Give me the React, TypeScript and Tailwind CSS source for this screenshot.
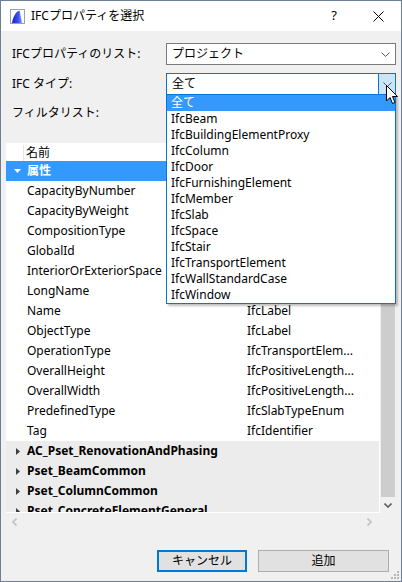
import React from 'react';

// values of the first rows are hidden behind the open dropdown
const props: [string, string][] = [
  ['CapacityByNumber', ''],
  ['CapacityByWeight', ''],
  ['CompositionType', ''],
  ['GlobalId', ''],
  ['InteriorOrExteriorSpace', ''],
  ['LongName', ''],
  ['Name', 'IfcLabel'],
  ['ObjectType', 'IfcLabel'],
  ['OperationType', 'IfcTransportElem...'],
  ['OverallHeight', 'IfcPositiveLength...'],
  ['OverallWidth', 'IfcPositiveLength...'],
  ['PredefinedType', 'IfcSlabTypeEnum'],
  ['Tag', 'IfcIdentifier'],
];

const groups = ['AC_Pset_RenovationAndPhasing', 'Pset_BeamCommon', 'Pset_ColumnCommon', 'Pset_ConcreteElementGeneral'];

const types = [
  '全て',
  'IfcBeam',
  'IfcBuildingElementProxy',
  'IfcColumn',
  'IfcDoor',
  'IfcFurnishingElement',
  'IfcMember',
  'IfcSlab',
  'IfcSpace',
  'IfcStair',
  'IfcTransportElement',
  'IfcWallStandardCase',
  'IfcWindow',
];

function Chevron({ className = '' }: { className?: string }) {
  return (
    <svg width="9" height="5" viewBox="0 0 9 5" className={className}>
      <path d="M0.5 0.5 L4.5 4.5 L8.5 0.5" fill="none" stroke="currentColor" strokeWidth="1" />
    </svg>
  );
}

function AppIcon() {
  return (
    <svg width="15" height="15" viewBox="0 0 15 15">
      <defs>
        <linearGradient id="sail" x1="0" y1="0" x2="1" y2="0">
          <stop offset="0" stopColor="#1a1fd0" />
          <stop offset="0.6" stopColor="#3b52f0" />
          <stop offset="1" stopColor="#8fa6ff" />
        </linearGradient>
      </defs>
      <rect x="0.5" y="0.5" width="14" height="14" fill="#ffffff" stroke="#9aa3b0" />
      <path d="M2 14 C3 8 6 2 10 1.5 L12.5 14 Z" fill="url(#sail)" />
      <path d="M10 1.5 L12.5 14" stroke="#ffffff" strokeWidth="0.8" />
    </svg>
  );
}

export default function App() {
  return (
    <div className="relative flex h-[582px] w-[402px] flex-col overflow-hidden border border-[#6e7e94] bg-[#f0f0f0] font-['Noto_Sans','Noto_Sans_CJK_JP',sans-serif] text-[12px] text-black">
      {/* title bar */}
      <div className="flex h-[30px] items-center bg-white pl-[9px]">
        <AppIcon />
        <span className="ml-[6px] text-[12px]">IFCプロパティを選択</span>
        <span className="ml-auto mr-[36px] text-[13px]">?</span>
        <svg width="11" height="11" viewBox="0 0 11 11" className="mr-[17px]">
          <path d="M0.5 0.5 L10.5 10.5 M10.5 0.5 L0.5 10.5" stroke="#000" strokeWidth="1" />
        </svg>
      </div>

      {/* body */}
      <div className="flex flex-1 flex-col px-[5px] pt-[12px]">
        <div className="flex h-[22px] items-center pl-[6px]">
          <span className="w-[154px]">IFCプロパティのリスト:</span>
          <div className="flex h-[22px] flex-1 items-center border border-[#7a7a7a] bg-white pl-[5px] pr-[5px]">
            <span>プロジェクト</span>
            <Chevron className="ml-auto text-[#555]" />
          </div>
        </div>

        <div className="mt-[8px] flex h-[22px] items-center pl-[6px]">
          <span className="w-[154px]">IFC タイプ:</span>
          <div className="flex h-[22px] flex-1 items-center border border-[#0078d7] bg-white pl-[5px]">
            <span>全て</span>
            <div className="ml-auto flex h-full w-[17px] items-center justify-center border-l border-[#0078d7] bg-[#cce4f7]">
              <Chevron className="text-[#555]" />
            </div>
          </div>
        </div>

        <div className="mt-[7px] flex h-[22px] items-center pl-[6px]">
          <span>フィルタリスト:</span>
        </div>

        {/* tree */}
        <div className="mt-[19px] flex h-[370px]">
          <div className="flex flex-1 flex-col overflow-hidden border-b border-r border-white">
            <div className="flex h-[18px] shrink-0 items-center bg-white pt-[2px]">
              <div className="h-full w-[18px] border-r border-[#e5e5e5]" />
              <span className="pl-[2px]">名前</span>
            </div>
            <div className="flex h-[20px] shrink-0 items-center bg-[#3399ff] font-bold text-white">
              <svg width="7" height="4" viewBox="0 0 7 4" className="ml-[8px]">
                <path d="M0 0 L7 0 L3.5 4 Z" fill="#ffffff" />
              </svg>
              <span className="ml-[6px]">属性</span>
            </div>
            {props.map(([name, type]) => (
              <div key={name} className="flex h-[20px] shrink-0 items-center bg-white">
                <span className="w-[241px] shrink-0 whitespace-nowrap pl-[21px]">{name}</span>
                <span className="whitespace-nowrap">{type}</span>
              </div>
            ))}
            {groups.map((g) => (
              <div key={g} className="flex h-[20px] shrink-0 items-center bg-[#ececec] font-bold">
                <svg width="4" height="7" viewBox="0 0 4 7" className="ml-[10px]">
                  <path d="M0 0 L4 3.5 L0 7 Z" fill="#404040" />
                </svg>
                <span className="ml-[7px] whitespace-nowrap">{g}</span>
              </div>
            ))}
          </div>
          {/* vertical scrollbar */}
          <div className="flex w-[16px] flex-col bg-[#f0f0f0]">
            <div className="h-[18px]" />
            <div className="mx-[1px] mt-[142px] h-[210px] bg-[#cdcdcd]" />
            <div className="flex-1" />
            <div className="flex h-[17px] items-center justify-center">
              <svg width="8" height="5" viewBox="0 0 8 5">
                <path d="M0.5 0.5 L4 4 L7.5 0.5" fill="none" stroke="#606060" strokeWidth="1.6" />
              </svg>
            </div>
          </div>
        </div>

        {/* horizontal scrollbar */}
        <div className="flex h-[18px] items-center pr-[16px]">
          <svg width="5" height="8" viewBox="0 0 5 8" className="ml-[6px]">
            <path d="M4.5 0.5 L1 4 L4.5 7.5" fill="none" stroke="#c2c2c2" strokeWidth="1.6" />
          </svg>
          <svg width="5" height="8" viewBox="0 0 5 8" className="ml-auto mr-[8px]">
            <path d="M0.5 0.5 L4 4 L0.5 7.5" fill="none" stroke="#c2c2c2" strokeWidth="1.6" />
          </svg>
        </div>

        {/* buttons */}
        <div className="mt-[19px] flex justify-end gap-[11px] pr-[7px]">
          <button type="button" className="flex h-[22px] w-[90px] items-center justify-center border-2 border-[#0078d7] bg-[#e1e1e1]">
            キャンセル
          </button>
          <button type="button" className="flex h-[22px] w-[131px] items-center justify-center border border-[#adadad] bg-[#e1e1e1]">
            追加
          </button>
        </div>
      </div>

      {/* resize grip */}
      <svg width="8" height="8" viewBox="0 0 8 8" className="absolute bottom-[2px] right-[2px]">
        <rect x="6" y="0" width="2" height="2" fill="#b8b8b8" />
        <rect x="3" y="3" width="2" height="2" fill="#b8b8b8" />
        <rect x="6" y="3" width="2" height="2" fill="#b8b8b8" />
        <rect x="0" y="6" width="2" height="2" fill="#b8b8b8" />
        <rect x="3" y="6" width="2" height="2" fill="#b8b8b8" />
        <rect x="6" y="6" width="2" height="2" fill="#b8b8b8" />
      </svg>

      {/* open dropdown list */}
      <div className="absolute left-[165px] top-[94px] flex w-[230px] flex-col border border-t-0 border-[#0078d7] bg-white shadow-[2px_2px_2px_rgba(0,0,0,0.25)]">
        {types.map((t, i) => (
          <div
            key={t}
            className={`flex h-[16px] items-center whitespace-nowrap pl-[4px] ${i === 0 ? 'bg-[#3399ff] text-white' : ''}`}
          >
            {t}
          </div>
        ))}
      </div>

      {/* mouse cursor */}
      <svg width="13" height="20" viewBox="0 0 13 20" className="absolute left-[385px] top-[84px]">
        <path
          d="M0.5 0.5 L0.5 16 L4 12.5 L6.5 18.5 L9 17.5 L6.5 11.5 L11.5 11.5 Z"
          fill="#ffffff"
          stroke="#000000"
          strokeWidth="1"
          strokeLinejoin="miter"
        />
      </svg>
    </div>
  );
}
